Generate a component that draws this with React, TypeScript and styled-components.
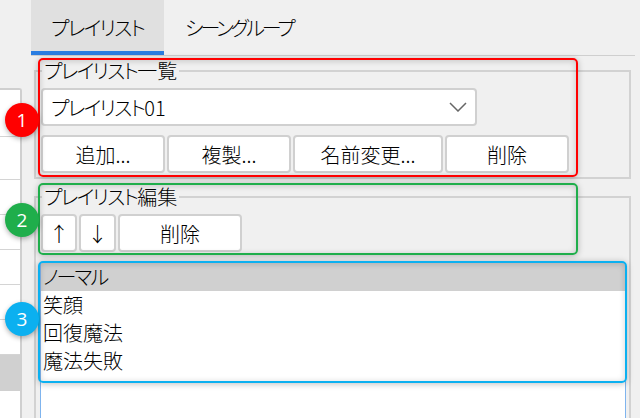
import React from "react";
import styled, { createGlobalStyle } from "styled-components";

const GlobalStyle = createGlobalStyle`
  html, body { margin: 0; padding: 0; background: #f0f0f0; }
  body {
    font-family: "Noto Sans CJK JP", "Noto Sans", sans-serif;
    font-weight: 300;
    font-feature-settings: "palt";
    color: #000;
  }
`;

const Page = styled.div`
  position: relative;
  display: flex;
  width: 640px;
  height: 418px;
  overflow: hidden;
  background: #f0f0f0;
`;

const Sidebar = styled.div`
  flex: none;
  width: 20px;
  height: 330px;
  margin-top: 88px;
  background: #fff;
  border: 2px solid #cfcfcf;
  border-left: none;
  border-bottom: none;
  border-top-right-radius: 3px;
`;

const SidebarRow = styled.div<{ $h: number; $selected?: boolean }>`
  height: ${(p) => p.$h}px;
  box-sizing: border-box;
  border-bottom: ${(p) => (p.$selected ? "none" : "1px solid #d4d4d4")};
  background: ${(p) => (p.$selected ? "#d0d0d0" : "#fff")};
`;

const Main = styled.div`
  flex: none;
  width: 604px;
  margin-left: 9px;
`;

const TabBar = styled.div`
  display: flex;
  height: 56px;
  box-sizing: border-box;
  border-bottom: 1px solid #cfcfcf;
`;

const Tab = styled.div<{ $active?: boolean }>`
  box-sizing: border-box;
  width: 133px;
  height: 55px;
  padding-top: 11px;
  padding-left: ${(p) => (p.$active ? 20 : 21)}px;
  font-size: 20px;
  line-height: 34px;
  white-space: nowrap;
  background: ${(p) => (p.$active ? "#e0e0e0" : "transparent")};
  border-bottom: 4px solid ${(p) => (p.$active ? "#2a7de1" : "transparent")};
`;

/* kana run narrower than the font's own metrics */
const Kana = styled.span<{ $sp?: number }>`
  letter-spacing: ${(p) => p.$sp ?? -1.7}px;
`;

const Panel = styled.div`
  padding: 14px 4px 0 3px;
`;

const GroupBox = styled.div<{ $fill?: boolean }>`
  position: relative;
  box-sizing: border-box;
  height: ${(p) => (p.$fill ? 260 : 109)}px;
  margin-bottom: ${(p) => (p.$fill ? 0 : 17)}px;
  padding: 16px 4px 0 5px;
  border: 2px solid #d2d2d2;
  ${(p) => (p.$fill ? "border-bottom: none;" : "")}
`;

const Legend = styled.div`
  position: absolute;
  top: -14px;
  left: 6px;
  padding: 0 2px;
  font-size: 20px;
  line-height: 26px;
  background: #f0f0f0;
  white-space: nowrap;
`;

const Combo = styled.div`
  box-sizing: border-box;
  display: flex;
  align-items: center;
  justify-content: space-between;
  width: 436px;
  height: 38px;
  padding: 0 8px 0 8px;
  margin-bottom: 9px;
  font-size: 20px;
  background: #fff;
  border: 2px solid #d0d0d0;
  border-radius: 4px;
`;

const ButtonRow = styled.div`
  display: flex;
  gap: 2px;
`;

const Button = styled.div<{ $w: number }>`
  box-sizing: border-box;
  display: flex;
  align-items: center;
  justify-content: center;
  width: ${(p) => p.$w}px;
  height: 38px;
  font-size: 20px;
  background: #fff;
  border: 2px solid #d0d0d0;
  border-radius: 4px;
  white-space: nowrap;
`;

const List = styled.div`
  box-sizing: border-box;
  width: 586px;
  height: 170px;
  margin: 11px 0 0 -1px;
  background: #fff;
  border-left: 1px solid #7fb4ee;
  border-right: 1px solid #7fb4ee;
`;

const ListItem = styled.div<{ $selected?: boolean }>`
  height: 28px;
  padding-left: 2px;
  font-size: 20px;
  line-height: 28px;
  white-space: nowrap;
  background: ${(p) => (p.$selected ? "#d0d0d0" : "transparent")};
`;

const Callout = styled.div<{ $color: string; $x: number; $y: number; $w: number; $h: number }>`
  position: absolute;
  box-sizing: border-box;
  left: ${(p) => p.$x}px;
  top: ${(p) => p.$y}px;
  width: ${(p) => p.$w}px;
  height: ${(p) => p.$h}px;
  border: 2px solid ${(p) => p.$color};
  border-radius: 5px;
  box-shadow: 0 1px 6px rgba(0, 0, 0, 0.25), inset 0 1px 6px rgba(0, 0, 0, 0.18);
`;

const Badge = styled.div<{ $color: string; $y: number }>`
  position: absolute;
  left: 5px;
  top: ${(p) => p.$y}px;
  width: 34px;
  height: 34px;
  display: flex;
  align-items: center;
  justify-content: center;
  border-radius: 50%;
  background: ${(p) => p.$color};
  color: #fff;
  font-family: "Open Sans", sans-serif;
  font-weight: 400;
  font-size: 19px;
  box-shadow: 0 2px 5px rgba(0, 0, 0, 0.3);
`;

export default function App() {
  return (
    <Page>
      <GlobalStyle />
      <Sidebar>
        <SidebarRow $h={47} />
        <SidebarRow $h={43} />
        <SidebarRow $h={35} />
        <SidebarRow $h={35} />
        <SidebarRow $h={35} />
        <SidebarRow $h={35} />
        <SidebarRow $h={35} />
        <SidebarRow $h={36} $selected />
      </Sidebar>
      <Main>
        <TabBar>
          <Tab $active>
            <Kana>プレイリスト</Kana>
          </Tab>
          <Tab>
            <Kana $sp={-3}>シーングループ</Kana>
          </Tab>
        </TabBar>
        <Panel>
          <GroupBox>
            <Legend>
              <Kana>プレイリスト</Kana>一覧
            </Legend>
            <Combo>
              <span>
                <Kana>プレイリスト</Kana>01
              </span>
              <svg width="18" height="10" viewBox="0 0 18 10" fill="none">
                <path d="M1 1l8 8 8-8" stroke="#666" strokeWidth="1.5" />
              </svg>
            </Combo>
            <ButtonRow>
              <Button $w={124}>追加...</Button>
              <Button $w={124}>複製...</Button>
              <Button $w={150}>名前変更...</Button>
              <Button $w={124}>削除</Button>
            </ButtonRow>
          </GroupBox>
          <GroupBox $fill>
            <Legend>
              <Kana>プレイリスト</Kana>編集
            </Legend>
            <ButtonRow>
              <Button $w={36}>↑</Button>
              <Button $w={37}>↓</Button>
              <Button $w={124}>削除</Button>
            </ButtonRow>
            <List>
              <ListItem $selected>
                <Kana $sp={-2}>ノーマル</Kana>
              </ListItem>
              <ListItem>笑顔</ListItem>
              <ListItem>回復魔法</ListItem>
              <ListItem>魔法失敗</ListItem>
            </List>
          </GroupBox>
        </Panel>
      </Main>
      <Callout $color="#ff0000" $x={38} $y={58} $w={540} $h={119} />
      <Callout $color="#1fae4b" $x={38} $y={183} $w={540} $h={72} />
      <Callout $color="#0bb0f0" $x={38} $y={261} $w={589} $h={122} />
      <Badge $color="#ff0000" $y={103}>1</Badge>
      <Badge $color="#1fae4b" $y={203}>2</Badge>
      <Badge $color="#0bb0f0" $y={302}>3</Badge>
    </Page>
  );
}
